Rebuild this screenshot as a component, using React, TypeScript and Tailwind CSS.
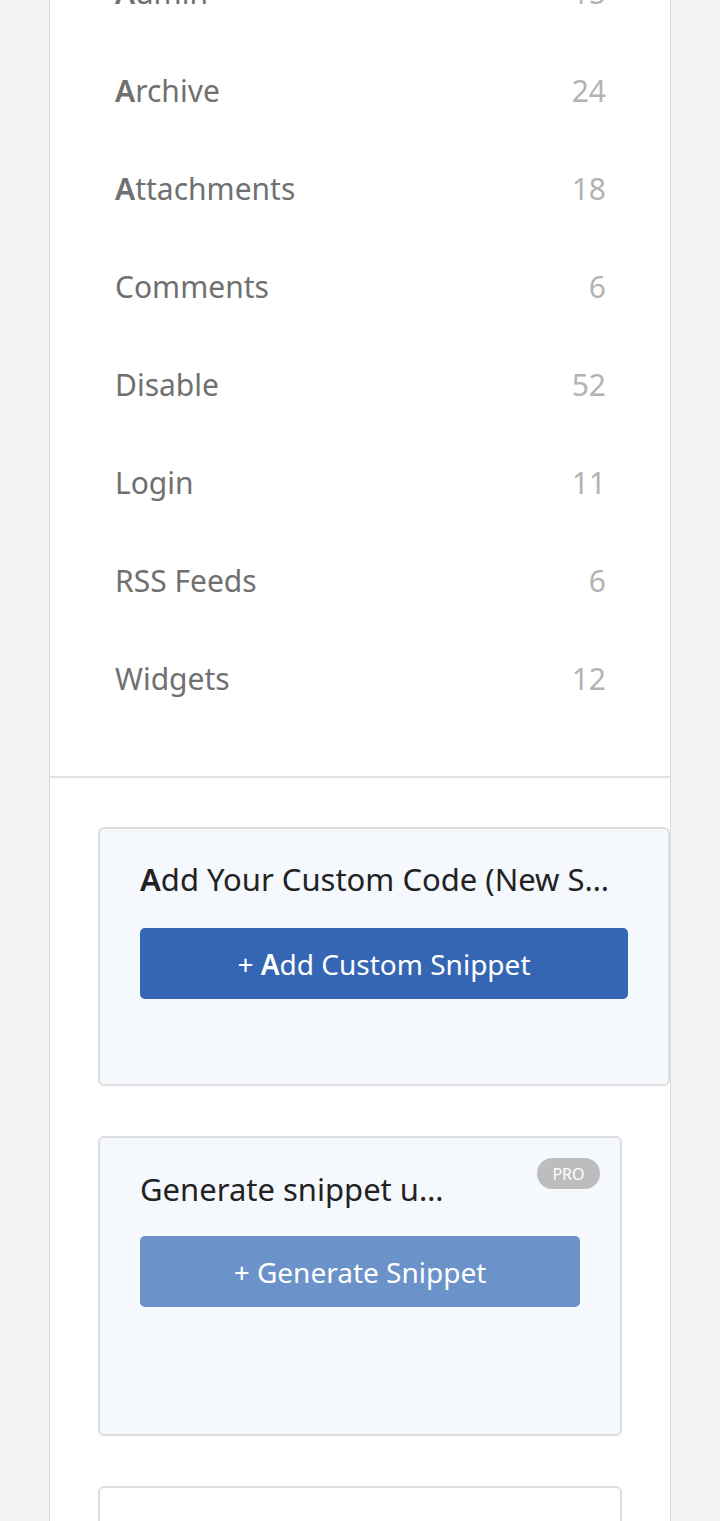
import React from 'react';

interface Category {
  name: string;
  count: number;
}

const categories: Category[] = [
  { name: 'Admin', count: 15 },
  { name: 'Archive', count: 24 },
  { name: 'Attachments', count: 18 },
  { name: 'Comments', count: 6 },
  { name: 'Disable', count: 52 },
  { name: 'Login', count: 11 },
  { name: 'RSS Feeds', count: 6 },
  { name: 'Widgets', count: 12 },
];

const Label: React.FC<{ text: string }> = ({ text }) => {
  if (text.startsWith('A')) {
    return (
      <>
        <span className="font-semibold">A</span>
        {text.slice(1)}
      </>
    );
  }
  return <>{text}</>;
};

const App: React.FC = () => {
  return (
    <div
      className="h-[1521px] overflow-hidden bg-[#f2f3f5]"
      style={{ fontFamily: '"Noto Sans", "Open Sans", sans-serif' }}
    >
      <div className="mx-[49px] h-full flex flex-col bg-white border-x border-[#dcdcdc]">
        <ul className="mt-[-57px] pb-[49px] border-b-2 border-[#e2e2e2]">
          {categories.map((cat) => (
            <li key={cat.name} className="h-[98px] flex items-center justify-between pl-[65px] pr-[64px]">
              <span className="text-[30px] text-[#707070]">
                <Label text={cat.name} />
              </span>
              <span className="text-[30px] text-[#b3b3b3]">{cat.count}</span>
            </li>
          ))}
        </ul>

        <div className="pt-[49px] pl-[48px] flex flex-col gap-[50px]">
          <div className="w-[572px] h-[259px] shrink-0 rounded-md border-2 border-[#dedede] bg-[#f5f8fd] pt-[30px] pl-[40px] pr-[40px]">
            <h3 className="text-[31px] leading-[40px] text-[#222] truncate">
              <Label text="Add Your Custom Code (New Snippet)" />
            </h3>
            <button className="mt-[29px] w-[488px] h-[71px] rounded-[5px] bg-[#3566b3] text-white text-[28px]">
              + <Label text="Add Custom Snippet" />
            </button>
          </div>

          <div className="relative w-[524px] h-[300px] shrink-0 rounded-md border-2 border-[#dedede] bg-[#f5f8fd] pt-[31px] pl-[40px] pr-[40px]">
            <span className="absolute top-[20px] right-[20px] w-[63px] h-[31px] rounded-full bg-[#bdbdbd] text-white text-[16px] flex items-center justify-center">
              PRO
            </span>
            <h3 className="w-[306px] text-[31px] leading-[40px] text-[#222] truncate">
              Generate snippet using AI
            </h3>
            <button className="mt-[27px] w-[440px] h-[71px] rounded-[5px] bg-[#6c92ca] text-white text-[28px]">
              + Generate Snippet
            </button>
          </div>

          <div className="w-[524px] h-[200px] shrink-0 rounded-md border-2 border-[#dedede] bg-white" />
        </div>
      </div>
    </div>
  );
};

export default App;
